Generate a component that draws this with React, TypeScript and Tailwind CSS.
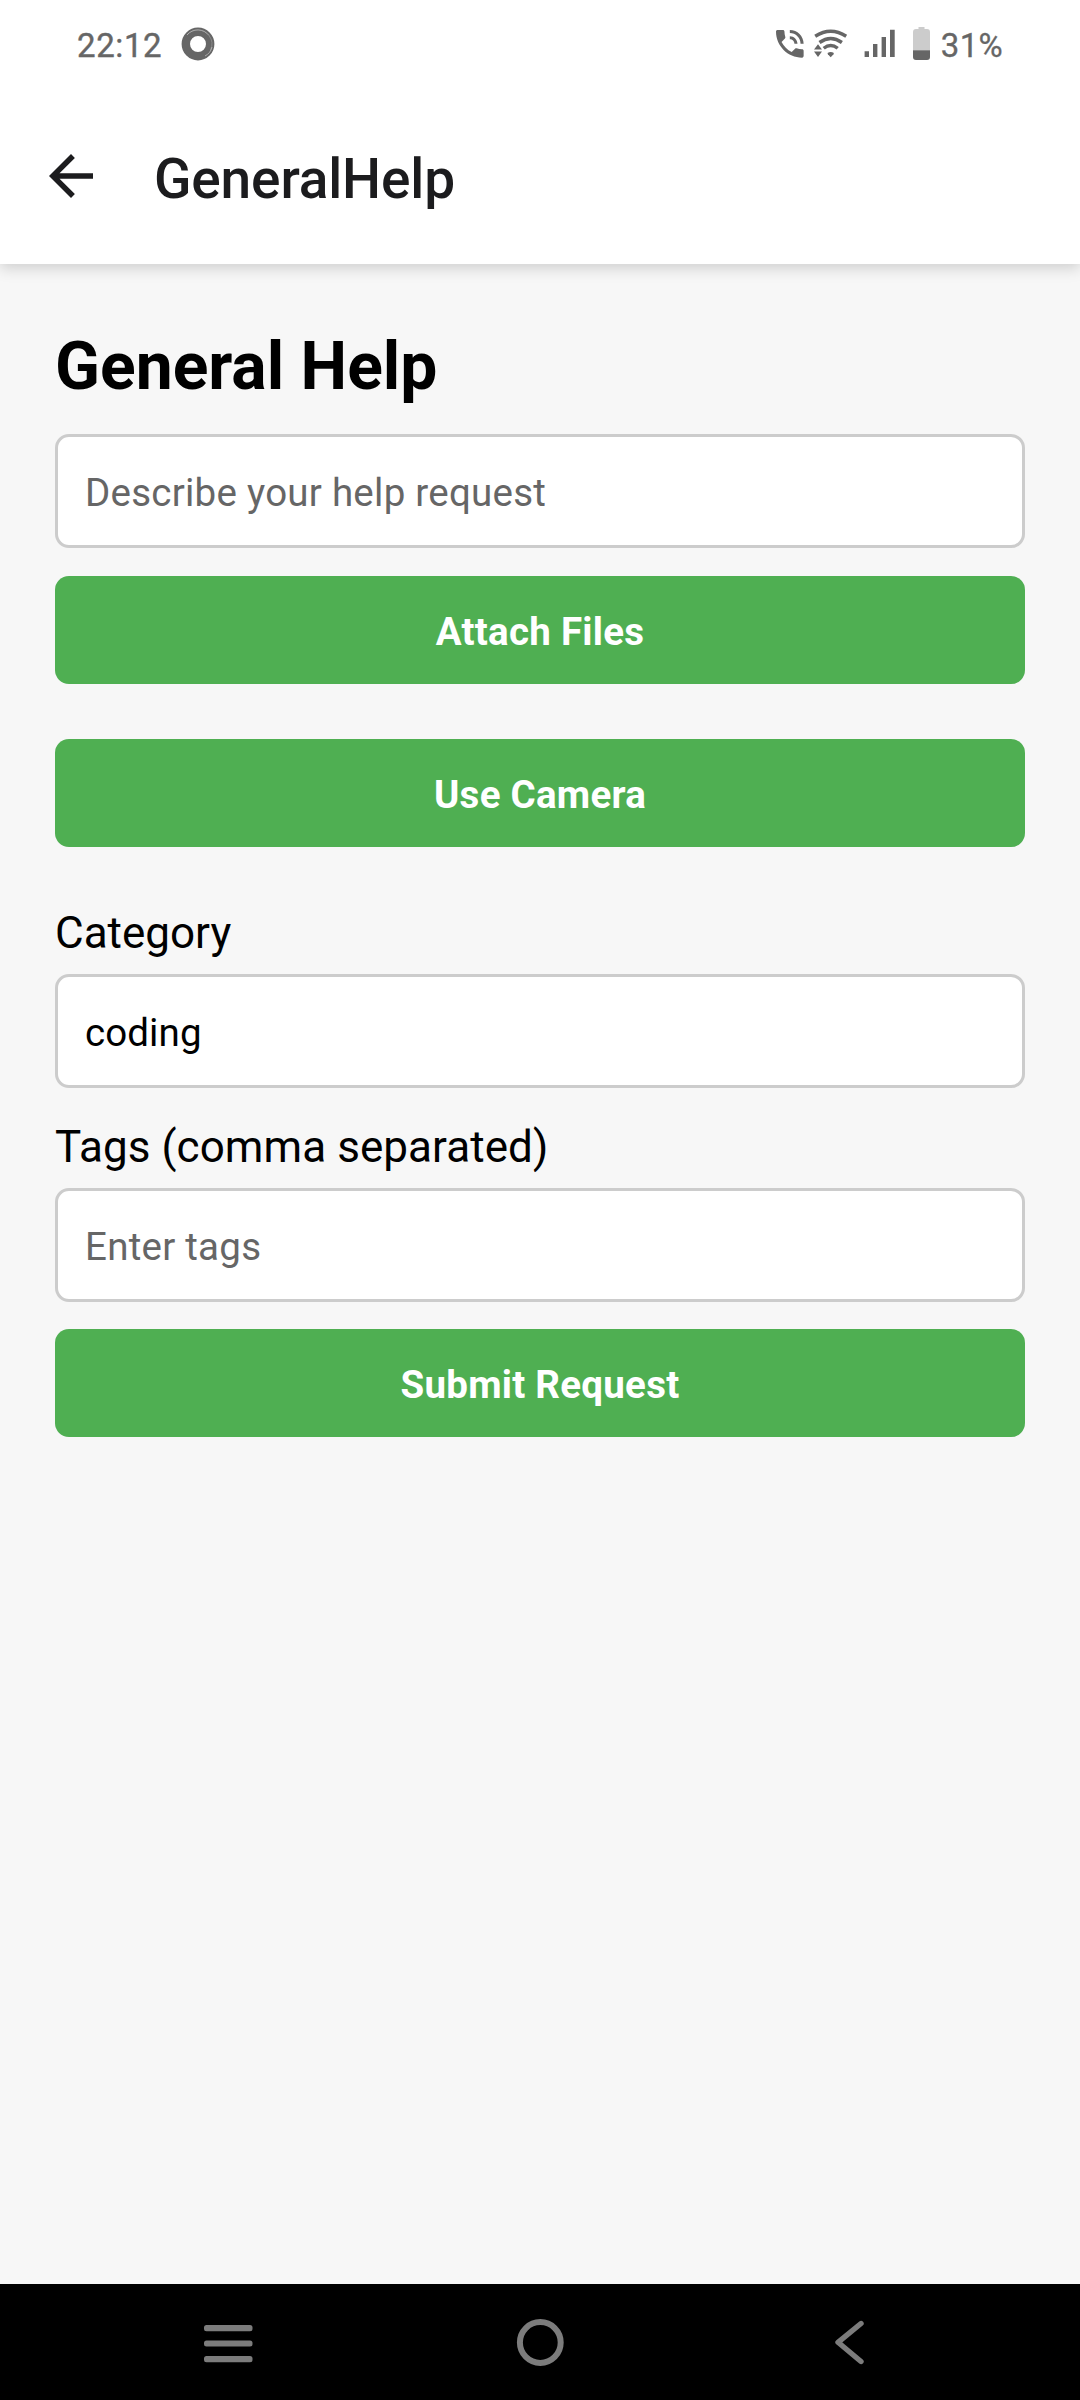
import type { ReactNode } from "react";

function StatusBar() {
  return (
    <div className="flex h-[88px] items-center justify-between pl-[77px] pr-[77px] text-[33px] leading-[40px] text-[#666666]">
      <div className="flex items-center">
        <span className="mt-[3px] w-[104px] tracking-[0.6px] [-webkit-text-stroke:0.4px_#666666]">22:12</span>
        <svg width="34" height="34" viewBox="0 0 34 34" fill="none">
          <circle cx="17" cy="17" r="12.2" stroke="#666666" strokeWidth="8.4" />
          <path d="M6 8A14 14 0 0 1 28 8.500" stroke="#b8b8b8" strokeWidth="0.900" />
          <path d="M28 8.500A14 14 0 0 1 29.500 23" stroke="#8c8c8c" strokeWidth="0.900" />
          <path d="M24 29A13.500 13.500 0 0 0 31 20" stroke="#bdbdbd" strokeWidth="0.800" />
        </svg>
      </div>
      <div className="flex items-center">
        <svg width="170" height="40" viewBox="774 24 170 40" fill="#666666">
          <g transform="translate(771.400 25.400) scale(1.535)">
            <path d="M20 15.500c-1.250 0-2.450-.2-3.570-.57-.35-.11-.74-.03-1.020.24l-2.200 2.200c-2.830-1.440-5.150-3.750-6.590-6.590l2.200-2.210c.28-.26.36-.65.25-1C8.700 6.450 8.500 5.250 8.500 4c0-.55-.45-1-1-1H4c-.55 0-1 .45-1 1 0 9.390 7.610 17 17 17 .55 0 1-.45 1-1v-3.500c0-.55-.45-1-1-1zM19 12h2c0-4.970-4.030-9-9-9v2c3.870 0 7 3.130 7 7zm-4 0h2c0-2.760-2.240-5-5-5v2c1.660 0 3 1.340 3 3z" />
          </g>
          <g fill="none" stroke="#666666" strokeWidth="3.400">
            <path d="M815.200 36.300Q830.700 26.300 846.200 36.300" />
            <path d="M819.500 42.500Q830.700 34.500 841.900 42.500" />
            <path d="M823.700 48.300Q830.700 42.500 837.700 48.300" />
          </g>
          <path d="M827.500 53Q830.700 50.800 833.900 53L833.500 54.300L830.700 57.200L827.900 54.300Z" />
          <path d="M818 44.300L822 49.500H814ZM814 51.400H822L818 57Z" />
          <path d="M864.600 51.300h4.400v5.700h-4.400zM873 44h4.400v13h-4.400zM881.600 37h4.400v20h-4.400zM890 29.700h4.700V57h-4.700z" />
          <path fill="#cccccc" d="M918.500 27h6v2h2.500a3 3 0 0 1 3 3v18.200h-17V32a3 3 0 0 1 3-3h2.500z" />
          <path d="M913 50.200h17V57a3 3 0 0 1-3 3h-11a3 3 0 0 1-3-3z" />
        </svg>
        <span className="mt-[3px] -ml-[3px] tracking-[0.3px] [-webkit-text-stroke:0.3px_#666666]">31%</span>
      </div>
    </div>
  );
}

function Header() {
  return (
    <header className="relative h-[264px] bg-white shadow-[0_4px_14px_rgba(0,0,0,0.17)]">
      <StatusBar />
      <div className="flex items-center pl-[38px] pt-[52px]">
        <svg className="size-[66px]" viewBox="0 0 24 24" fill="#1c1c1e">
          <path d="M20 11H7.830l5.590-5.590L12 4l-8 8 8 8 1.410-1.410L7.830 13H20v-2z" />
        </svg>
        <div className="ml-[50px] mt-[6px] text-[55px] font-medium leading-[66px] tracking-[-0.15px] text-[#1c1c1e]">
          GeneralHelp
        </div>
      </div>
    </header>
  );
}

function Field({ children, filled = false }: { children: ReactNode; filled?: boolean }) {
  return (
    <div
      className={`flex h-[114px] items-center rounded-[14px] border-[3px] border-[#cccccc] bg-white px-[27px] pt-[4px] text-[38.5px] ${
        filled ? "tracking-[0.1px] text-black" : "tracking-[0.25px] text-[#666666]"
      }`}
    >
      {children}
    </div>
  );
}

function Button({ children }: { children: ReactNode }) {
  return (
    <button className="flex h-[108px] w-full items-center justify-center rounded-[14px] bg-[#4faf52] pt-[4px] text-[38.5px] font-bold tracking-[0.25px] text-white">
      {children}
    </button>
  );
}

function NavBar() {
  return (
    <nav className="grid h-[116px] grid-cols-3 place-items-center bg-black px-[72px]">
      <svg width="60" height="60" viewBox="0 0 60 60" fill="#7c7c7c">
        <rect x="6" y="13" width="48.500" height="6.200" rx="2.500" />
        <rect x="6" y="28.400" width="48.500" height="6.200" rx="2.500" />
        <rect x="6" y="44" width="48.500" height="6.200" rx="2.500" />
      </svg>
      <svg width="60" height="60" viewBox="0 0 60 60" fill="none">
        <circle cx="30.300" cy="30.500" r="20.400" stroke="#7c7c7c" strokeWidth="6" />
      </svg>
      <svg width="60" height="60" viewBox="0 0 60 60" fill="none">
        <path d="M39 11.500L16 30.300L39 49.500" stroke="#7c7c7c" strokeWidth="5.400" strokeLinecap="round" strokeLinejoin="round" />
      </svg>
    </nav>
  );
}

export default function App() {
  return (
    <div className="flex h-[2400px] w-[1080px] flex-col bg-[#f7f7f7] font-[Roboto,sans-serif]">
      <Header />
      <main className="flex-1 px-[55px] pt-[63px]">
        <h1 className="h-[107px] text-[66px] font-bold leading-[80px] text-black">General Help</h1>
        <Field>Describe your help request</Field>
        <div className="mt-[28px] flex flex-col gap-[55px]">
          <Button>Attach Files</Button>
          <Button>Use Camera</Button>
        </div>
        <div className="mt-[60px] h-[67px] text-[44px] leading-[52px] text-black">Category</div>
        <Field filled>coding</Field>
        <div className="mt-[33px] h-[67px] text-[44px] leading-[52px] tracking-[0.07px] text-black">Tags (comma separated)</div>
        <Field>Enter tags</Field>
        <div className="mt-[27px]">
          <Button>Submit Request</Button>
        </div>
      </main>
      <NavBar />
    </div>
  );
}
